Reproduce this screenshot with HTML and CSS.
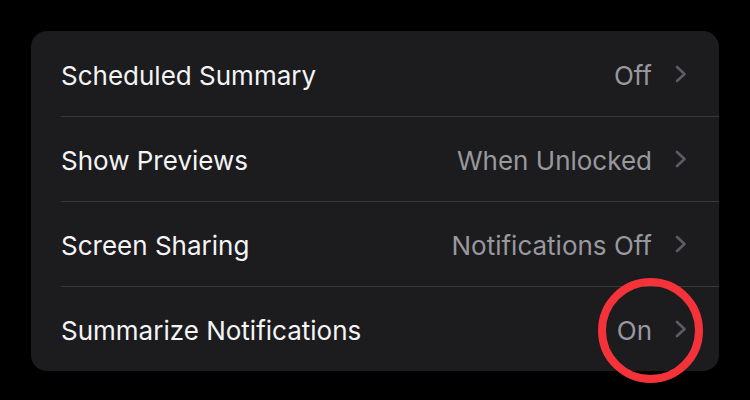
FILE: index.html
```html
<!DOCTYPE html>
<html lang="en">
<head>
    <meta charset="UTF-8">
    <meta name="viewport" content="width=device-width, initial-scale=1.0">
    <title>Notifications</title>
    <link rel="stylesheet" href="styles.css">
</head>
<body>

<div class="card">
    <div class="row">
        <span class="label">Scheduled Summary</span>
        <span class="value">Off</span>
        <svg class="chevron" viewBox="0 0 12 18"><path d="M2 2 L9.5 9 L2 16"/></svg>
    </div>
    <div class="row">
        <span class="label">Show Previews</span>
        <span class="value">When Unlocked</span>
        <svg class="chevron" viewBox="0 0 12 18"><path d="M2 2 L9.5 9 L2 16"/></svg>
    </div>
    <div class="row">
        <span class="label">Screen Sharing</span>
        <span class="value">Notifications Off</span>
        <svg class="chevron" viewBox="0 0 12 18"><path d="M2 2 L9.5 9 L2 16"/></svg>
    </div>
    <div class="row">
        <span class="label">Summarize Notifications</span>
        <span class="value">On</span>
        <svg class="chevron" viewBox="0 0 12 18"><path d="M2 2 L9.5 9 L2 16"/></svg>
    </div>

    <!-- hand-drawn highlight around the last value -->
    <div class="highlight"></div>
</div>

</body>
</html>
```

FILE: styles.css
```css
body {
    margin: 0;
    padding: 31px;
    background-color: #000;
    font-family: Inter, "Noto Sans", sans-serif;
}

.card {
    position: relative;
    width: 688px;
    background-color: #1c1c1e;
    border-radius: 16px;
}

.row {
    display: flex;
    align-items: center;
    height: 85px;
    margin-left: 30px;
    padding-top: 3px;
    padding-right: 32px;
    box-sizing: border-box;
    font-size: 26px;
}

.row + .row {
    border-top: 1px solid #38383a;
}

.label {
    flex: 1;
    color: #f4f4f6;
}

.value {
    color: #98989e;
    margin-right: 23px;
}

.chevron {
    width: 12px;
    height: 18px;
    margin-top: -3px;
    fill: none;
    stroke: #5c5c61;
    stroke-width: 2.6;
    stroke-linecap: round;
    stroke-linejoin: round;
}

.highlight {
    position: absolute;
    left: 567px;
    top: 247px;
    width: 105px;
    height: 105px;
    box-sizing: border-box;
    border: 8px solid #f43239;
    border-radius: 50%;
}
```
